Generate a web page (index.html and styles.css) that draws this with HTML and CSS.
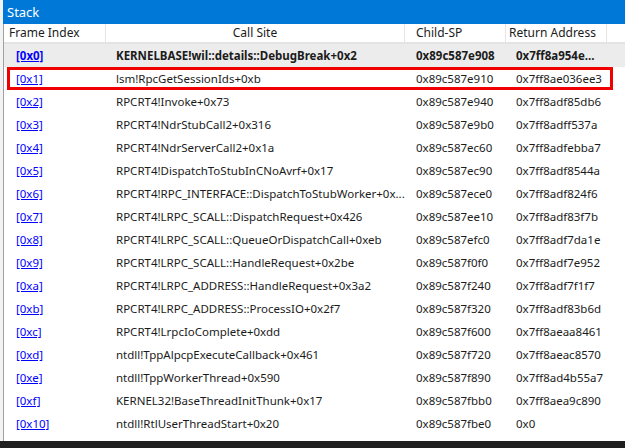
FILE: index.html
```html
<!DOCTYPE html>
<html>
<head>
<meta charset="utf-8">
<link rel="stylesheet" href="styles.css">
</head>
<body>
<div class="window">
  <div class="title">Stack</div>
  <div class="panel">
    <div class="row head">
      <div class="cell c1">Frame Index</div>
      <div class="cell c2">Call Site</div>
      <div class="cell c3">Child-SP</div>
      <div class="cell c4">Return Address</div>
      <div class="cell c5"></div>
    </div>
    <div class="rows">
      <div class="row current">
        <div class="cell c1"><a href="#">[0x0]</a></div>
        <div class="cell c2">KERNELBASE!wil::details::DebugBreak+0x2</div>
        <div class="cell c3">0x89c587e908</div>
        <div class="cell c4">0x7ff8a954e...</div>
      </div>
      <div class="row selected">
        <div class="cell c1"><a href="#">[0x1]</a></div>
        <div class="cell c2">lsm!RpcGetSessionIds+0xb</div>
        <div class="cell c3">0x89c587e910</div>
        <div class="cell c4">0x7ff8ae036ee3</div>
      </div>
      <div class="row">
        <div class="cell c1"><a href="#">[0x2]</a></div>
        <div class="cell c2">RPCRT4!Invoke+0x73</div>
        <div class="cell c3">0x89c587e940</div>
        <div class="cell c4">0x7ff8adf85db6</div>
      </div>
      <div class="row">
        <div class="cell c1"><a href="#">[0x3]</a></div>
        <div class="cell c2">RPCRT4!NdrStubCall2+0x316</div>
        <div class="cell c3">0x89c587e9b0</div>
        <div class="cell c4">0x7ff8adff537a</div>
      </div>
      <div class="row">
        <div class="cell c1"><a href="#">[0x4]</a></div>
        <div class="cell c2">RPCRT4!NdrServerCall2+0x1a</div>
        <div class="cell c3">0x89c587ec60</div>
        <div class="cell c4">0x7ff8adfebba7</div>
      </div>
      <div class="row">
        <div class="cell c1"><a href="#">[0x5]</a></div>
        <div class="cell c2">RPCRT4!DispatchToStubInCNoAvrf+0x17</div>
        <div class="cell c3">0x89c587ec90</div>
        <div class="cell c4">0x7ff8adf8544a</div>
      </div>
      <div class="row">
        <div class="cell c1"><a href="#">[0x6]</a></div>
        <div class="cell c2">RPCRT4!RPC_INTERFACE::DispatchToStubWorker+0x...</div>
        <div class="cell c3">0x89c587ece0</div>
        <div class="cell c4">0x7ff8adf824f6</div>
      </div>
      <div class="row">
        <div class="cell c1"><a href="#">[0x7]</a></div>
        <div class="cell c2">RPCRT4!LRPC_SCALL::DispatchRequest+0x426</div>
        <div class="cell c3">0x89c587ee10</div>
        <div class="cell c4">0x7ff8adf83f7b</div>
      </div>
      <div class="row">
        <div class="cell c1"><a href="#">[0x8]</a></div>
        <div class="cell c2">RPCRT4!LRPC_SCALL::QueueOrDispatchCall+0xeb</div>
        <div class="cell c3">0x89c587efc0</div>
        <div class="cell c4">0x7ff8adf7da1e</div>
      </div>
      <div class="row">
        <div class="cell c1"><a href="#">[0x9]</a></div>
        <div class="cell c2">RPCRT4!LRPC_SCALL::HandleRequest+0x2be</div>
        <div class="cell c3">0x89c587f0f0</div>
        <div class="cell c4">0x7ff8adf7e952</div>
      </div>
      <div class="row">
        <div class="cell c1"><a href="#">[0xa]</a></div>
        <div class="cell c2">RPCRT4!LRPC_ADDRESS::HandleRequest+0x3a2</div>
        <div class="cell c3">0x89c587f240</div>
        <div class="cell c4">0x7ff8adf7f1f7</div>
      </div>
      <div class="row">
        <div class="cell c1"><a href="#">[0xb]</a></div>
        <div class="cell c2">RPCRT4!LRPC_ADDRESS::ProcessIO+0x2f7</div>
        <div class="cell c3">0x89c587f320</div>
        <div class="cell c4">0x7ff8adf83b6d</div>
      </div>
      <div class="row">
        <div class="cell c1"><a href="#">[0xc]</a></div>
        <div class="cell c2">RPCRT4!LrpcIoComplete+0xdd</div>
        <div class="cell c3">0x89c587f600</div>
        <div class="cell c4">0x7ff8aeaa8461</div>
      </div>
      <div class="row">
        <div class="cell c1"><a href="#">[0xd]</a></div>
        <div class="cell c2">ntdll!TppAlpcpExecuteCallback+0x461</div>
        <div class="cell c3">0x89c587f720</div>
        <div class="cell c4">0x7ff8aeac8570</div>
      </div>
      <div class="row">
        <div class="cell c1"><a href="#">[0xe]</a></div>
        <div class="cell c2">ntdll!TppWorkerThread+0x590</div>
        <div class="cell c3">0x89c587f890</div>
        <div class="cell c4">0x7ff8ad4b55a7</div>
      </div>
      <div class="row">
        <div class="cell c1"><a href="#">[0xf]</a></div>
        <div class="cell c2">KERNEL32!BaseThreadInitThunk+0x17</div>
        <div class="cell c3">0x89c587fbb0</div>
        <div class="cell c4">0x7ff8aea9c890</div>
      </div>
      <div class="row">
        <div class="cell c1"><a href="#">[0x10]</a></div>
        <div class="cell c2">ntdll!RtlUserThreadStart+0x20</div>
        <div class="cell c3">0x89c587fbe0</div>
        <div class="cell c4">0x0</div>
      </div>
    </div>
  </div>
  <div class="statusbar"></div>
</div>
</body>
</html>
```

FILE: styles.css
```css
html, body {
  margin: 0;
  padding: 0;
  width: 625px;
  height: 448px;
  overflow: hidden;
  background: #f3f3f3;
}
body {
  font-family: "Noto Sans", "Liberation Sans", sans-serif;
  font-size: 11.5px;
  color: #1b1b1b;
}
.window {
  display: flex;
  flex-direction: column;
  height: 448px;
  padding-left: 3px;
  box-sizing: border-box;
}
.title {
  height: 24px;
  background: #0078d7;
  color: #ffffff;
  font-size: 13px;
  line-height: 24px;
  padding-left: 4px;
  flex: none;
}
.panel {
  flex: 1;
  background: #ffffff;
  border-left: 1px solid #a0a0a0;
  display: flex;
  flex-direction: column;
  min-height: 0;
}
.row {
  display: grid;
  grid-template-columns: 102px 299px 101px 101px 1fr;
  height: 23px;
  align-items: center;
  box-sizing: border-box;
}
.cell {
  white-space: nowrap;
  overflow: hidden;
  text-overflow: clip;
}
.head {
  height: 20px;
  border-bottom: 2px solid #e3e3e3;
  align-items: stretch;
  color: #1b1b1b;
  font-size: 12px;
}
.head .cell {
  border-right: 1px solid #e5e5e5;
  line-height: 18px;
}
.head .c1 { padding-left: 5px; }
.head .c2 { text-align: center; }
.head .c3 { padding-left: 11px; }
.head .c4 { padding-left: 3px; }
.head .c5 { border-right: none; }
.rows .c1 { padding-left: 12px; }
.rows .c2 { padding-left: 10px; }
.rows .c3 { padding-left: 11px; }
.rows .c4 { padding-left: 10px; }
a {
  color: #0000ff;
  text-decoration: underline;
}
.current {
  background: #ececec;
  font-weight: bold;
}
.selected {
  margin: 0 12px 0 3px;
  border: 3px solid #f00000;
  grid-template-columns: 96px 299px 101px 101px 1fr;
}
.selected .c1 { padding-left: 6px; }
.statusbar {
  height: 7px;
  background: #1f1f1f;
  flex: none;
  margin-left: -3px;
}
```
